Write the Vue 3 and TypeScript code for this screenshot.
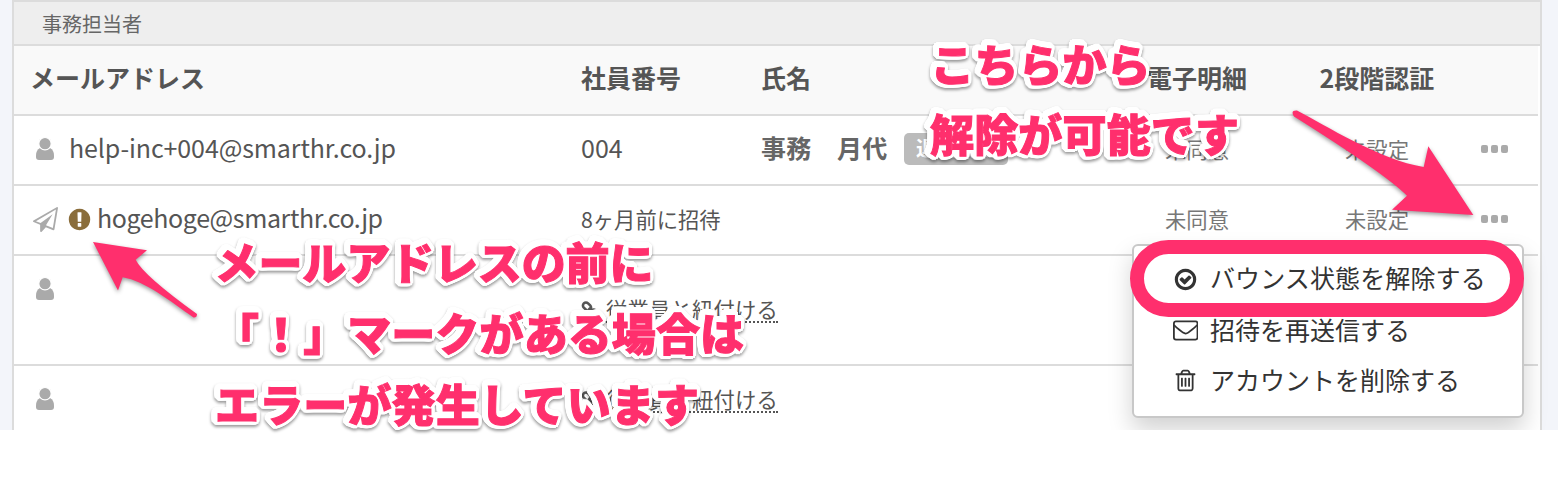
<script setup lang="ts">
interface Member {
  kind: 'user' | 'invite'
  email: string
  number: string
  name: string
  badge: string
  link: boolean
  status: boolean
  tall: boolean
}

const base = { email: '', number: '', name: '', badge: '', link: false, status: false, tall: false }
const members: Member[] = [
  { ...base, kind: 'user', email: 'help-inc+004@smarthr.co.jp', number: '004', name: '事務　月代', badge: '退職済み', status: true },
  { ...base, kind: 'invite', email: 'hogehoge@smarthr.co.jp', number: '8ヶ月前に招待', status: true },
  { ...base, kind: 'user', link: true, tall: true },
  { ...base, kind: 'user', link: true },
]

const notes = [
  { x: 930.5, y: 81.5, w: 220, text: 'こちらから' },
  { x: 930, y: 151.5, w: 309, text: '解除が可能です' },
  { x: 214.5, y: 280, w: 439, text: 'メールアドレスの前に' },
  { x: 215, y: 350.5, w: 529, text: '「！」マークがある場合は' },
  { x: 215, y: 421.5, w: 484, text: 'エラーが発生しています' },
]
</script>

<template>
  <div class="page">
    <div class="screen">
      <main class="panel">
        <div class="section">事務担当者</div>
        <div class="row head">
          <div class="cell">メールアドレス</div>
          <div class="cell">社員番号</div>
          <div class="cell">氏名</div>
          <div class="cell center">電子明細</div>
          <div class="cell center">2段階認証</div>
          <div class="cell"></div>
        </div>
        <div v-for="(m, i) in members" :key="i" class="row" :class="{ tall: m.tall }">
          <div class="cell mail" :class="{ invite: m.kind === 'invite' }">
            <svg v-if="m.kind === 'user'" class="user" viewBox="0 0 18 22">
              <path d="M4 10h10q4 2 4 7.5v1.500q0 3-3 3H3q-3 0-3-3v-1.500Q0 12 4 10z" />
              <circle cx="9" cy="5.700" r="6.200" class="head-shape" />
            </svg>
            <template v-else>
              <svg class="plane" viewBox="0 0 1792 1792"><path d="M1764 11q33 24 27 64l-256 1536q-5 29-32 45-14 8-31 8-11 0-24-5l-527-215-298 327q-18 21-47 21-14 0-23-4-19-7-30-23.5t-11-36.500v-452l-472-193q-37-14-40-55-3-39 32-59l1664-960q35-21 68 2zm-342 1499l221-1323-1434 827 336 137 863-639-478 797z" /></svg>
              <svg class="warn" viewBox="0 0 1792 1792"><path d="M896 128q209 0 385.500 103t279.500 279.500 103 385.500-103 385.500-279.500 279.500-385.500 103-385.500-103-279.500-279.500-103-385.500 103-385.500 279.500-279.500 385.500-103zm128 1247v-190q0-14-9-23.500t-22-9.500h-192q-13 0-23 10t-10 23v190q0 13 10 23t23 10h192q13 0 22-9.500t9-23.500zm-2-344l18-621q0-12-10-18-10-8-24-8h-220q-14 0-24 8-10 6-10 18l17 621q0 10 10 17.500t24 7.500h185q14 0 23.500-7.500t10.500-17.500z" /></svg>
            </template>
            <span v-if="m.email" class="address">{{ m.email }}</span>
          </div>
          <div class="cell number" :class="{ small: m.kind === 'invite' }">
            {{ m.number }}
            <span v-if="m.link" class="attach">
              <svg class="chain" viewBox="0 0 20 20">
                <rect x="1.500" y="3.500" width="9" height="6" rx="3" transform="rotate(45 6 6.500)" />
                <rect x="9" y="10.500" width="9" height="6" rx="3" transform="rotate(45 13.500 13.500)" />
                <path d="M7.500 8l4.500 4.500" />
              </svg>
              <a>従業員と紐付ける</a>
            </span>
          </div>
          <div class="cell name">
            {{ m.name }}<span v-if="m.badge" class="badge">{{ m.badge }}</span>
          </div>
          <div class="cell center state"><template v-if="m.status">未同意</template></div>
          <div class="cell center state"><template v-if="m.status">未設定</template></div>
          <div class="cell more"><template v-if="m.status"><i></i><i></i><i></i></template></div>
        </div>
      </main>
      <ul class="menu">
        <li>
          <svg viewBox="0 0 1792 1792"><path d="M1299 813l-422 422q-19 19-45 19t-45-19l-294-294q-19-19-19-45t19-45l102-102q19-19 45-19t45 19l147 147 275-275q19-19 45-19t45 19l102 102q19 19 19 45t-19 45zm141 83q0-148-73-273t-198-198-273-73-273 73-198 198-73 273 73 273 198 198 273 73 273-73 198-198 73-273zm224 0q0 209-103 385.500t-279.500 279.500-385.500 103-385.500-103-279.500-279.500-103-385.500 103-385.500 279.500-279.500 385.500-103 385.500 103 279.500 279.500 103 385.500z" /></svg>
          <span>バウンス状態を解除する</span>
        </li>
        <li>
          <svg viewBox="0 0 25 25" class="outline"><rect x=".9" y="3.400" width="23.600" height="18.200" rx="2" /><path d="M1 7q2 2.200 5 4.500l4 3.100q2.700 1.900 5.200 0l4-3.100q3-2.300 5-4.500" /></svg>
          <span>招待を再送信する</span>
        </li>
        <li>
          <svg viewBox="0 0 1792 1792"><path d="M704 736v576q0 14-9 23t-23 9h-64q-14 0-23-9t-9-23v-576q0-14 9-23t23-9h64q14 0 23 9t9 23zm256 0v576q0 14-9 23t-23 9h-64q-14 0-23-9t-9-23v-576q0-14 9-23t23-9h64q14 0 23 9t9 23zm256 0v576q0 14-9 23t-23 9h-64q-14 0-23-9t-9-23v-576q0-14 9-23t23-9h64q14 0 23 9t9 23zm128 724v-948h-896v948q0 22 7 40.500t14.500 27 10.500 8.500h832q3 0 10.500-8.500t14.500-27 7-40.500zm-672-1076h448l-48-117q-7-9-17-11h-317q-10 2-17 11zm928 32v64q0 14-9 23t-23 9h-96v948q0 83-47 143.500t-113 60.500h-832q-66 0-113-58.500t-47-141.500v-952h-96q-14 0-23-9t-9-23v-64q0-14 9-23t23-9h309l70-167q15-37 54-63t79-26h320q40 0 79 26t54 63l70 167h309q14 0 23 9t9 23z" /></svg>
          <span>アカウントを削除する</span>
        </li>
      </ul>
    </div>
    <div class="ring"></div>
    <svg class="notes" viewBox="0 0 1558 488">
      <path class="arrow" d="M93 242L147 250.300L135.700 259.700Q143 275 197 314Q197 318 193.500 317.500C170 301 145 281 122.700 277.300L118 290.500Z" />
      <path class="arrow" d="M1297 110.500C1325 125 1380 160 1423.700 167L1428.300 146.300L1473.300 215L1392 209.700L1407 195.700Q1384 173 1294 116.500Q1290 110 1297 110.500Z" />
      <text v-for="n in notes" :key="n.text" :x="n.x" :y="n.y" :textLength="n.w">{{ n.text }}</text>
    </svg>
  </div>
</template>

<style>
body {
  margin: 0;
  background: #fff;
}
</style>

<style scoped>
.page {
  position: relative;
  width: 1558px;
  height: 488px;
  overflow: hidden;
  background: #fff;
  font-family: "Noto Sans CJK JP", sans-serif;
  color: #555;
}
.screen {
  position: relative;
  height: 430px;
  overflow: hidden;
  background: #f3f5fa;
}
.panel {
  box-sizing: border-box;
  width: 1530px;
  height: 440px;
  margin-left: 12px;
  border: 2px solid #dcdcdc;
  background: #fff;
}
.section {
  height: 42px;
  padding-left: 28px;
  border-bottom: 2px solid #dcdcdc;
  background: #eee;
  font-size: 20px;
  line-height: 43px;
  color: #666;
}
.row {
  display: grid;
  grid-template-columns: 551px 180px 362px 180px 180px 71px;
  width: 1524px;
  height: 68px;
  border-bottom: 2px solid #dcdcdc;
  font-size: 25px;
  line-height: 63px;
  white-space: nowrap;
}
.row.tall {
  height: 108px;
}
.head {
  background: #f9f9f9;
  font-weight: 700;
}
.cell {
  padding-left: 16px;
}
.cell.center {
  padding: 0;
  text-align: center;
}
.mail {
  display: flex;
  align-items: center;
  height: 66px;
}
.address {
  padding-bottom: 3px;
  letter-spacing: -0.1px;
}
.invite .address {
  letter-spacing: -0.4px;
}
.user {
  width: 18px;
  height: 22px;
  margin: 0 15px 0 6px;
  overflow: visible;
  fill: #aaa;
}
.head-shape {
  stroke: #fff;
  stroke-width: 1.2;
}
.plane {
  width: 25px;
  height: 25px;
  margin-left: 3px;
  fill: #aaa;
}
.warn {
  width: 25px;
  height: 25px;
  margin: 0 5px 0 9px;
  fill: #8a6d3b;
}
.number.small,
.attach,
.state {
  font-size: 21.3px;
}
.state {
  line-height: 66px;
  color: #777;
}
.number.small {
  line-height: 66px;
}
.attach {
  display: flex;
  align-items: center;
  height: 68px;
  line-height: 27px;
}
.tall .attach {
  height: 108px;
}
.chain {
  flex: none;
  width: 20px;
  height: 20px;
  margin-right: 5px;
  fill: none;
  stroke: #555;
  stroke-width: 2.6;
}
.attach a {
  height: 24px;
  line-height: 23px;
  letter-spacing: 0.2px;
  border-bottom: 2px dotted #555;
}
.name {
  display: flex;
  align-items: center;
  height: 63px;
  font-weight: 700;
  letter-spacing: 0.3px;
  color: #666;
}
.badge {
  width: 80px;
  height: 32px;
  margin: 2px 0 0 16.500px;
  padding: 0 12px;
  border-radius: 5px;
  background: #bbb;
  color: #fff;
  font-size: 20px;
  line-height: 30px;
  letter-spacing: 0;
}
.more {
  display: flex;
  align-items: center;
  gap: 2.700px;
  height: 66px;
  padding-left: 14px;
}
.more i {
  width: 7.200px;
  height: 7.200px;
  border-radius: 2px;
  background: #aaa;
}
.menu {
  position: absolute;
  top: 244px;
  left: 1132px;
  box-sizing: border-box;
  width: 392px;
  height: 174px;
  margin: 0;
  padding: 7.500px 0 0 39px;
  border: 2px solid #c8c8c8;
  border-radius: 6px;
  background: #fff;
  box-shadow: 0 12px 24px rgba(0, 0, 0, 0.18);
  list-style: none;
  color: #333;
}
.menu li {
  display: flex;
  align-items: center;
  gap: 12px;
  height: 51px;
  font-size: 25px;
  line-height: 48px;
}
.menu li:last-child {
  height: 50px;
}
.menu span {
  padding-bottom: 3px;
}
.menu li:first-child span {
  padding-bottom: 5px;
  letter-spacing: 0.12px;
}
.menu svg {
  width: 25px;
  height: 25px;
  fill: #333;
}
.menu .outline {
  fill: none;
  stroke: #333;
  stroke-width: 1.8;
}
.ring {
  position: absolute;
  top: 240px;
  left: 1130px;
  box-sizing: border-box;
  width: 394px;
  height: 77px;
  border: 14px solid #ff2f6d;
  border-radius: 38.500px;
}
.notes {
  position: absolute;
  top: 0;
  left: 0;
  width: 1558px;
  height: 488px;
}
.arrow {
  fill: #ff2f6d;
  filter: drop-shadow(0 2px 2px rgba(0, 0, 0, 0.4));
}
.notes text {
  font-size: 44px;
  font-weight: 900;
  fill: #ff2f6d;
  stroke: #ff2f6d;
  stroke-width: 1px;
  filter:
    drop-shadow(1.2px 0 0 #fff) drop-shadow(-1.2px 0 0 #fff)
    drop-shadow(0 1.2px 0 #fff) drop-shadow(0 -1.2px 0 #fff)
    drop-shadow(1.2px 1.2px 0 #fff) drop-shadow(-1.2px -1.2px 0 #fff)
    drop-shadow(1.2px -1.2px 0 #fff) drop-shadow(-1.2px 1.2px 0 #fff)
    drop-shadow(0 2px 1.500px rgba(0, 0, 0, 0.4));
}
</style>
